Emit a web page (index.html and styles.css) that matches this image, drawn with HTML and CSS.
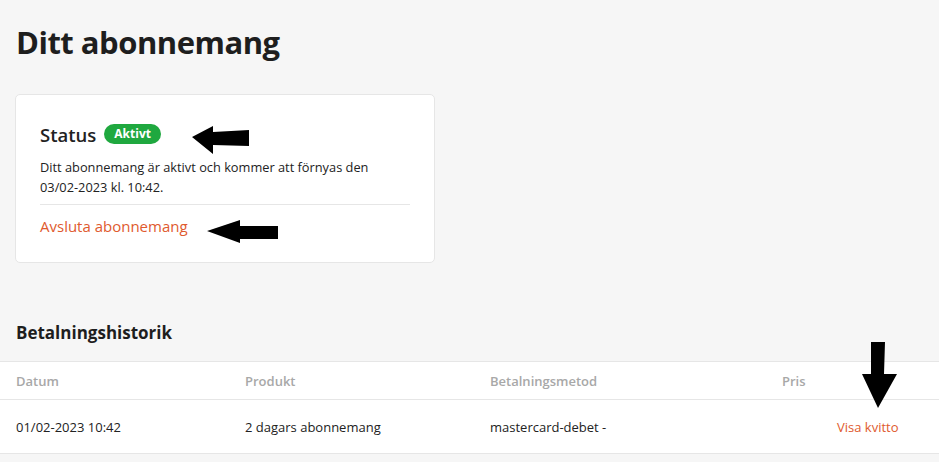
FILE: index.html
```html
<!DOCTYPE html>
<html lang="sv">
<head>
  <meta charset="UTF-8" />
  <meta name="viewport" content="width=device-width, initial-scale=1.0"/>
  <title>Ditt abonnemang</title>
  <link rel="stylesheet" href="styles.css">
</head>
<body>

  <div class="page">
    <h1>Ditt abonnemang</h1>

    <div class="card">
      <div class="status">
        <span class="status-title">Status</span>
        <span class="badge">Aktivt</span>
      </div>
      <p class="desc">Ditt abonnemang är aktivt och kommer att förnyas den <span class="nowrap">03/02-2023</span> kl. 10:42.</p>
      <div class="divider"></div>
      <a class="link cancel" href="#">Avsluta abonnemang</a>
    </div>

    <h2>Betalningshistorik</h2>
  </div>

  <table class="history">
    <thead>
      <tr>
        <th class="c-date">Datum</th>
        <th class="c-prod">Produkt</th>
        <th class="c-method">Betalningsmetod</th>
        <th class="c-price">Pris</th>
        <th></th>
      </tr>
    </thead>
    <tbody>
      <tr>
        <td>01/02-2023 10:42</td>
        <td>2 dagars abonnemang</td>
        <td>mastercard-debet -</td>
        <td></td>
        <td><a class="link" href="#">Visa kvitto</a></td>
      </tr>
    </tbody>
  </table>

  <!-- annotation arrows -->
  <svg class="arrow arrow-1" width="60" height="32" viewBox="0 0 60 32">
    <polygon points="0,12 21,1 21,7 57,5 57,21 21,20 21,29" />
  </svg>
  <svg class="arrow arrow-2" width="74" height="26" viewBox="0 0 74 26">
    <polygon points="0,11 33,0 33,6 71,6 71,19 33,19 33,23" />
  </svg>
  <svg class="arrow arrow-3" width="40" height="68" viewBox="0 0 40 68">
    <polygon points="10,0 24,0 23,32 36,32 17,66 1,32 10,32" />
  </svg>

</body>
</html>
```

FILE: styles.css
```css
html, body {
  margin: 0;
  padding: 0;
}
body {
  font-family: "Open Sans", "Noto Sans", sans-serif;
  background-color: #f6f6f6;
  color: #222;
  position: relative;
  width: 939px;
  height: 462px;
  overflow: hidden;
}
.page {
  padding: 0 16px;
}
h1 {
  margin: 0;
  padding-top: 21px;
  font-size: 31px;
  font-weight: 700;
  line-height: 42px;
  letter-spacing: -0.5px;
  color: #1e1e1e;
}
.card {
  margin-top: 31px;
  margin-left: -1px;
  width: 370px;
  padding: 24px 24px 24px;
  background: #fff;
  border: 1px solid #e6e6e6;
  border-radius: 5px;
}
.status {
  display: flex;
  align-items: center;
  gap: 8px;
  height: 30px;
}
.status-title {
  font-size: 18.5px;
  font-weight: 600;
  color: #222;
}
.badge {
  background: #1fa83f;
  color: #fff;
  font-size: 12px;
  font-weight: 700;
  padding: 0 10px;
  line-height: 20px;
  border-radius: 10px;
}
.desc {
  margin: 8px 0 0;
  font-size: 12.8px;
  line-height: 20px;
  color: #222;
}
.nowrap {
  white-space: nowrap;
}
.divider {
  margin-top: 7px;
  height: 1px;
  background: #e6e6e6;
}
.link {
  color: #e05a2e;
  text-decoration: none;
}
.cancel {
  display: block;
  margin-top: 9px;
  font-size: 15px;
  line-height: 24px;
}
h2 {
  margin: 0;
  padding-top: 57px;
  padding-bottom: 15px;
  font-size: 17px;
  font-weight: 700;
  line-height: 26px;
  color: #1e1e1e;
}
.history {
  width: 939px;
  border-collapse: collapse;
  background: #fff;
  font-size: 13px;
}
.history th, .history td {
  text-align: left;
  padding: 0 0 0 16px;
  border-top: 1px solid #e6e6e6;
  border-bottom: 1px solid #e6e6e6;
}
.history th {
  height: 37px;
  font-weight: 600;
  color: #a8a8a8;
}
.history td {
  height: 53px;
  color: #222;
}
.c-date { width: 213px; }
.c-prod { width: 229px; }
.c-method { width: 276px; }
.c-price { width: 39px; }
.arrow {
  position: absolute;
  fill: #000;
}
.arrow-1 { left: 192px; top: 125px; }
.arrow-2 { left: 207px; top: 220px; }
.arrow-3 { left: 861px; top: 342px; }
```
